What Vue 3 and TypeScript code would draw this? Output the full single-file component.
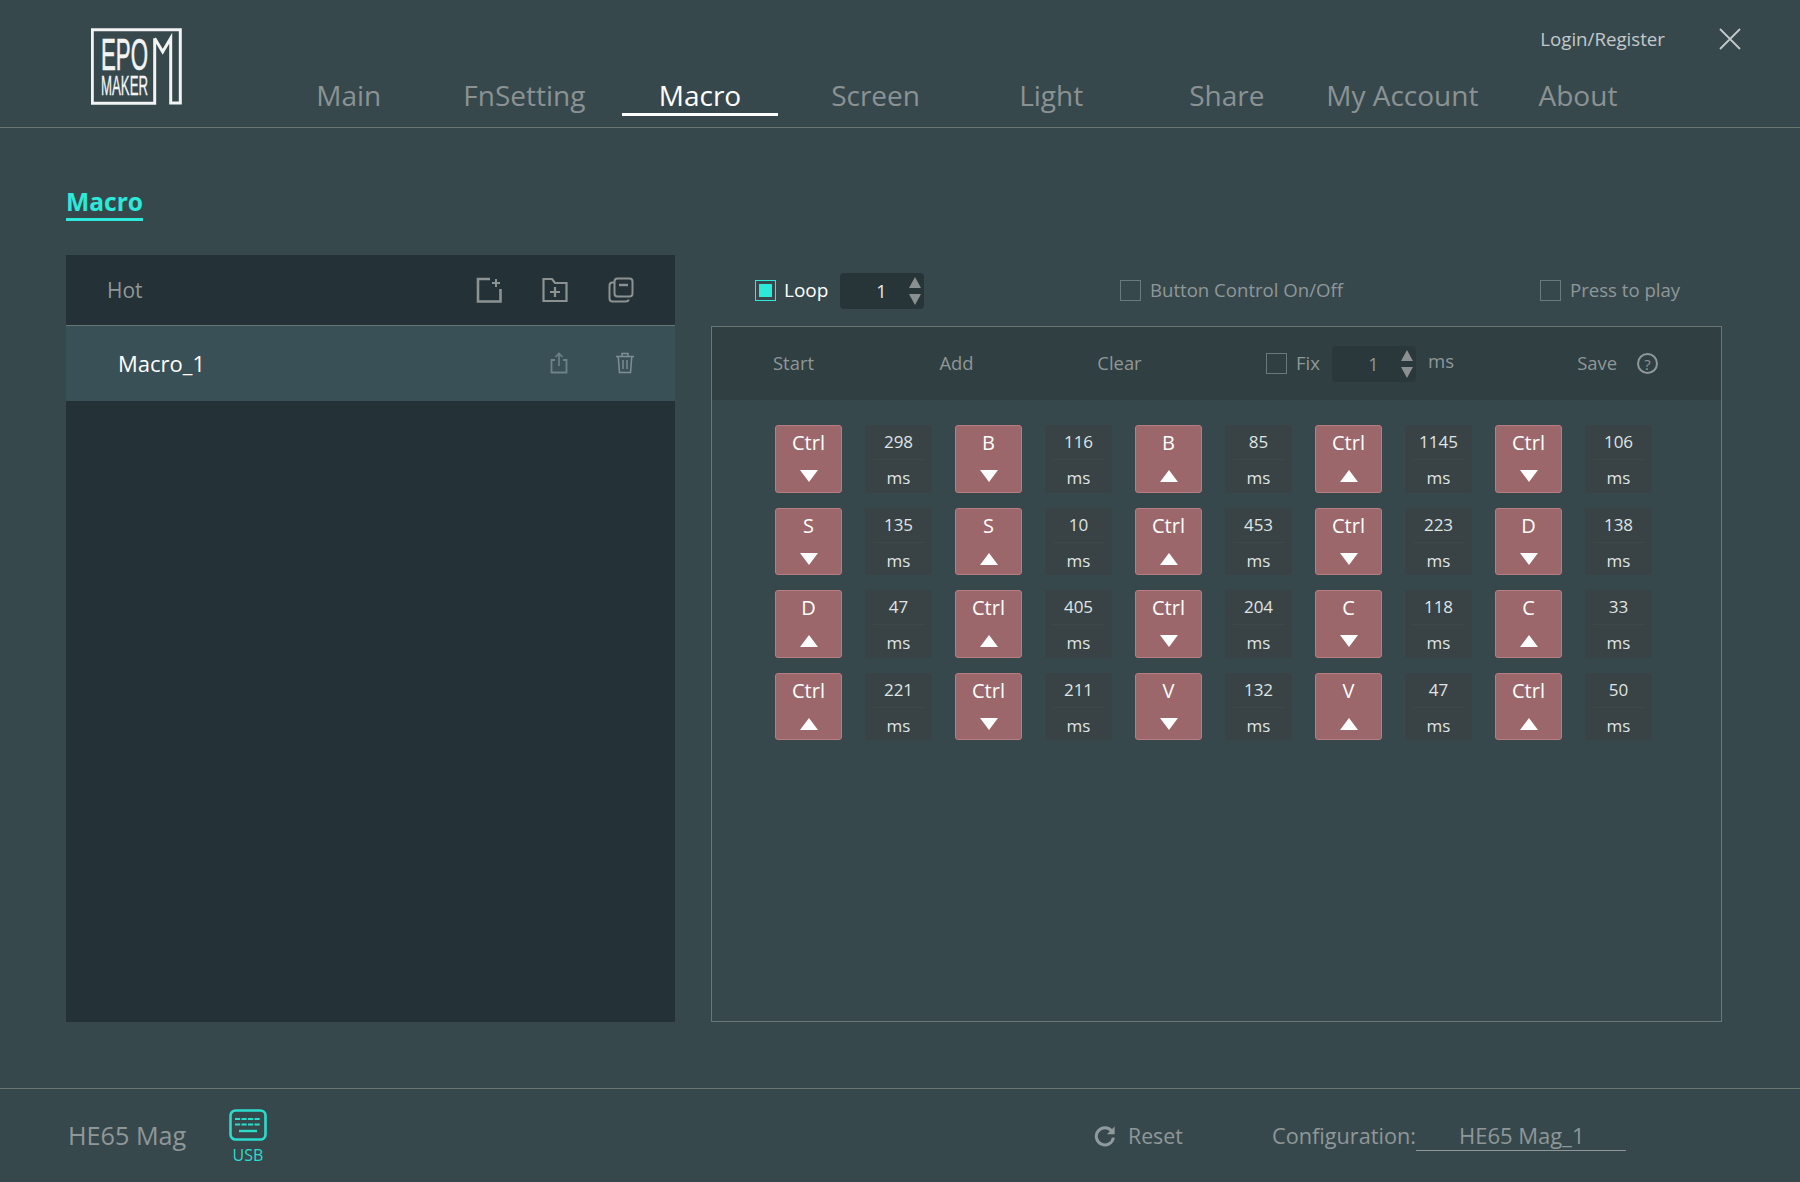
<template>
  <div class="app">
    <header class="topbar">
      <svg class="logo" viewBox="0 0 93 78" role="img" aria-label="Epomaker">
        <path
          d="M63.7 10.3 V75.3 H1.3 V1.7 H89.3 V75 H79.7 V10.3 L71.7 23.7 L63.7 10.3"
          fill="none"
          stroke="#f2f4f4"
          stroke-width="3"
        />
        <text x="10" y="42" textLength="47" lengthAdjust="spacingAndGlyphs" class="logo-big">EPO</text>
        <text x="10" y="67" textLength="47" lengthAdjust="spacingAndGlyphs" class="logo-small">MAKER</text>
      </svg>

      <div class="topbar-right">
        <div class="account-row">
          <span class="login">Login/Register</span>
          <svg class="close" viewBox="0 0 22 22">
            <path d="M1 1 L21 21 M21 1 L1 21" stroke="#c3c9ca" stroke-width="1.8" fill="none" />
          </svg>
        </div>
        <nav class="nav">
          <div v-for="item in navItems" :key="item" class="nav-item" :class="{ active: item === 'Macro' }">
            <span>{{ item }}</span>
          </div>
        </nav>
      </div>
    </header>

    <main class="content">
      <div class="section-title"><span>Macro</span></div>

      <div class="columns">
        <aside class="list-panel">
          <div class="list-head">
            <span class="hot">Hot</span>
            <div class="head-icons">
              <svg viewBox="0 0 26 26" width="26" height="26">
                <path d="M14 2 H2 V24.5 H24.5 V12" fill="none" stroke="#8c9292" stroke-width="2.6" />
                <path d="M20 2 V10 M16 6 H24" fill="none" stroke="#8c9292" stroke-width="2" />
              </svg>
              <svg viewBox="0 0 26 26" width="26" height="26">
                <path d="M1.5 2 H10 L13 6 H24.5 V24 H1.5 Z" fill="none" stroke="#8c9292" stroke-width="2.2" />
                <path d="M13 10 V20 M8 15 H18" fill="none" stroke="#8c9292" stroke-width="2.2" />
              </svg>
              <svg viewBox="0 0 26 26" width="26" height="26">
                <rect x="6.5" y="1.5" width="18" height="18" rx="3" fill="none" stroke="#8c9292" stroke-width="2" />
                <path d="M11 8 H20" stroke="#8c9292" stroke-width="2.4" />
                <path d="M6.5 5.5 H4.5 Q1.5 5.5 1.5 8.5 V21.5 Q1.5 24.5 4.5 24.5 H17.5 Q20.5 24.5 20.5 22.5" fill="none" stroke="#8c9292" stroke-width="2" />
              </svg>
            </div>
          </div>
          <div class="macro-row">
            <span class="macro-name">Macro_1</span>
            <div class="row-icons">
              <svg viewBox="0 0 20 22" width="20" height="22">
                <path d="M6 8 H2.5 V20.5 H17.5 V8 H14" fill="none" stroke="#6f8287" stroke-width="1.8" />
                <path d="M10 14 V2 M6.5 5 L10 1.5 L13.5 5" fill="none" stroke="#6f8287" stroke-width="1.6" />
              </svg>
              <svg viewBox="0 0 20 22" width="20" height="22">
                <path d="M1 4.5 H19 M7 4.5 V1.5 H13 V4.5" fill="none" stroke="#7f8f93" stroke-width="1.5" />
                <path d="M3.2 4.5 L4.5 20.5 H15.5 L16.8 4.5" fill="none" stroke="#7f8f93" stroke-width="1.5" />
                <path d="M8 8 V17 M12 8 V17" fill="none" stroke="#7f8f93" stroke-width="1.4" />
              </svg>
            </div>
          </div>
        </aside>

        <section class="editor">
          <div class="options">
            <div class="option loop-option">
              <span class="check checked"></span>
              <span class="loop-label">Loop</span>
              <div class="spin">
                <span class="spin-value">1</span>
                <span class="arrows"><i class="tri up"></i><i class="tri down"></i></span>
              </div>
            </div>
            <div class="option control-option">
              <span class="check"></span>
              <span>Button Control On/Off</span>
            </div>
            <div class="option">
              <span class="check"></span>
              <span>Press to play</span>
            </div>
          </div>

          <div class="recorder">
            <div class="toolbar">
              <span class="tool">Start</span>
              <span class="tool">Add</span>
              <span class="tool">Clear</span>
              <span class="check fix-check"></span>
              <span class="fix-label">Fix</span>
              <div class="spin spin-fix">
                <span class="spin-value">1</span>
                <span class="arrows"><i class="tri up"></i><i class="tri down"></i></span>
              </div>
              <span class="fix-unit">ms</span>
              <span class="save">Save</span>
              <span class="help">?</span>
            </div>

            <div class="events">
              <template v-for="(ev, i) in events" :key="i">
                <div class="key">
                  <span class="key-name">{{ ev.key }}</span>
                  <i class="key-arrow" :class="ev.down ? 'down' : 'up'"></i>
                </div>
                <div class="delay">
                  <span class="delay-value">{{ ev.ms }}</span>
                  <span class="delay-unit">ms</span>
                </div>
              </template>
            </div>
          </div>
        </section>
      </div>
    </main>

    <footer class="footer">
      <span class="device-name">HE65 Mag</span>
      <div class="device-link">
        <svg viewBox="0 0 38 32" width="38" height="32">
          <rect x="1.5" y="1.5" width="35" height="29" rx="5" fill="none" stroke="#2cdccb" stroke-width="2.6" />
          <path d="M6 10 H32 M6 15.5 H32" fill="none" stroke="#2cdccb" stroke-width="2" stroke-dasharray="5.2 1.3" />
          <path d="M10 22 H28" fill="none" stroke="#2cdccb" stroke-width="2.4" />
        </svg>
        <span>USB</span>
      </div>
      <div class="reset">
        <svg viewBox="0 0 22 22" width="22" height="22">
          <path d="M17.8 6.2 A8.6 8.6 0 1 0 19.4 12.6" fill="none" stroke="#8f9a9c" stroke-width="3" />
          <path d="M20.6 1.6 V9.2 H13 Z" fill="#8f9a9c" />
        </svg>
        <span>Reset</span>
      </div>
      <span class="config-label">Configuration:</span>
      <span class="config-field">HE65 Mag_1</span>
    </footer>
  </div>
</template>

<script setup lang="ts">
interface MacroEvent {
  key: string
  down: boolean
  ms: number
}

const navItems = ['Main', 'FnSetting', 'Macro', 'Screen', 'Light', 'Share', 'My Account', 'About']

const events: MacroEvent[] = [
  { key: 'Ctrl', down: true, ms: 298 },
  { key: 'B', down: true, ms: 116 },
  { key: 'B', down: false, ms: 85 },
  { key: 'Ctrl', down: false, ms: 1145 },
  { key: 'Ctrl', down: true, ms: 106 },
  { key: 'S', down: true, ms: 135 },
  { key: 'S', down: false, ms: 10 },
  { key: 'Ctrl', down: false, ms: 453 },
  { key: 'Ctrl', down: true, ms: 223 },
  { key: 'D', down: true, ms: 138 },
  { key: 'D', down: false, ms: 47 },
  { key: 'Ctrl', down: false, ms: 405 },
  { key: 'Ctrl', down: true, ms: 204 },
  { key: 'C', down: true, ms: 118 },
  { key: 'C', down: false, ms: 33 },
  { key: 'Ctrl', down: false, ms: 221 },
  { key: 'Ctrl', down: true, ms: 211 },
  { key: 'V', down: true, ms: 132 },
  { key: 'V', down: false, ms: 47 },
  { key: 'Ctrl', down: false, ms: 50 },
]
</script>

<style>
html,
body {
  margin: 0;
  background: #37484d;
}
</style>

<style scoped>
.app {
  width: 1800px;
  height: 1182px;
  overflow: hidden;
  background: #37484d;
  color: #8f9798;
  font-family: "Open Sans", "Noto Sans", sans-serif;
  font-size: 18.6px;
  display: flex;
  flex-direction: column;
}

.topbar {
  height: 127px;
  box-sizing: content-box;
  display: flex;
  padding-left: 91px;
  border-bottom: 1px solid #6a7674;
}

.logo {
  width: 93px;
  height: 78px;
  margin-top: 28px;
  margin-right: 77px;
  flex: none;
}

.logo-big {
  fill: #f2f4f4;
  stroke: #f2f4f4;
  stroke-width: 0.6;
  font-family: "Liberation Sans", sans-serif;
  font-size: 44px;
}

.logo-small {
  fill: #f2f4f4;
  stroke: #f2f4f4;
  stroke-width: 0.3;
  font-family: "Liberation Sans", sans-serif;
  font-size: 27px;
}

.topbar-right {
  flex: 1;
  display: flex;
  flex-direction: column;
}

.account-row {
  height: 78px;
  display: flex;
  align-items: center;
  justify-content: flex-end;
  padding-right: 59px;
}

.login {
  color: #c3c9ca;
  font-size: 18.7px;
  margin-right: 54px;
  margin-top: -2px;
}

.close {
  width: 22px;
  height: 22px;
}

.nav {
  display: flex;
}

.nav-item {
  width: 175.6px;
  flex: none;
  display: flex;
  justify-content: center;
  font-size: 28px;
  color: #8b9293;
}

.nav-item span {
  width: 156px;
  height: 35px;
  line-height: 35px;
  text-align: center;
  border-bottom: 3px solid transparent;
  white-space: nowrap;
}

.nav-item.active {
  color: #fff;
}

.nav-item.active span {
  border-bottom-color: #fff;
}

.content {
  flex: 1;
  padding: 0 78px 0 66px;
}

.section-title {
  height: 127px;
  padding-top: 56px;
  box-sizing: border-box;
}

.section-title span {
  display: inline-block;
  height: 34px;
  line-height: 35px;
  color: #2de9d9;
  font-size: 24.6px;
  font-weight: 700;
  border-bottom: 3px solid #2de9d9;
}

.columns {
  display: flex;
  gap: 36px;
  height: 767px;
}

.list-panel {
  width: 609px;
  flex: none;
  background: #243136;
}

.list-head {
  height: 70px;
  display: flex;
  align-items: center;
  justify-content: space-between;
  padding: 0 41px;
  border-bottom: 1px solid #6a7674;
}

.hot {
  font-size: 21px;
}

.head-icons {
  display: flex;
  gap: 40px;
}

.macro-row {
  height: 75px;
  background: #3a5057;
  display: flex;
  align-items: center;
  justify-content: space-between;
  padding: 0 40px 0 52px;
}

.macro-name {
  color: #fff;
  font-size: 22px;
  margin-top: -2px;
}

.row-icons {
  display: flex;
  gap: 46px;
  margin-top: -2px;
}

.editor {
  flex: 1;
  display: flex;
  flex-direction: column;
}

.options {
  height: 71px;
  display: flex;
  align-items: center;
  padding-left: 44px;
}

.option {
  display: flex;
  align-items: center;
  gap: 9px;
}

.option > span:last-child {
  margin-top: -2px;
}

.loop-option {
  width: 365px;
}

.control-option {
  width: 420px;
}

.check {
  width: 21px;
  height: 21px;
  box-sizing: border-box;
  border: 1px solid #6a7a7c;
  display: inline-flex;
  align-items: center;
  justify-content: center;
  flex: none;
}

.check.checked {
  border-color: #2de9d9;
}

.check.checked::after {
  content: "";
  width: 13px;
  height: 13px;
  background: #2de9d9;
}

.loop-label {
  color: #fff;
  width: 47px;
  margin-left: -1px;
  margin-top: -2px;
  font-size: 19px;
}

.spin {
  width: 84px;
  height: 36px;
  background: #273438;
  border-radius: 4px;
  position: relative;
  display: flex;
  align-items: center;
  justify-content: center;
}

.spin-value {
  color: #e8ecec;
  font-size: 18px;
  margin-right: 1px;
}

.arrows {
  position: absolute;
  right: 1px;
  top: 4px;
  display: flex;
  flex-direction: column;
  gap: 6px;
  width: 14px;
}

.tri {
  display: block;
  width: 0;
  height: 0;
  border-left: 6.5px solid transparent;
  border-right: 6.5px solid transparent;
}

.tri.up {
  border-bottom: 11px solid #8a8f8f;
}

.tri.down {
  border-top: 11px solid #8a8f8f;
}

.recorder {
  flex: 1;
  border: 1px solid #6a7674;
}

.toolbar {
  height: 73px;
  background: #2f3f42;
  display: flex;
  align-items: center;
  padding-right: 63px;
}

.tool {
  width: 163px;
  text-align: center;
  flex: none;
  font-size: 18.4px;
  margin-top: -2px;
}

.fix-check {
  margin-left: 65px;
}

.fix-label {
  margin-left: 9px;
  width: 36px;
  margin-top: -2px;
}

.spin-fix {
  background: #2a383b;
}

.spin-fix .spin-value {
  color: #8f9798;
}

.fix-unit {
  margin-left: 12px;
  margin-top: -7px;
}

.save {
  margin-left: auto;
  font-size: 18.4px;
  margin-top: -2px;
}

.help {
  width: 21px;
  height: 21px;
  box-sizing: border-box;
  border: 2px solid #8f9798;
  border-radius: 50%;
  margin-left: 20px;
  display: flex;
  align-items: center;
  justify-content: center;
  font-size: 15px;
}

.events {
  display: grid;
  grid-template-columns: repeat(10, 67px);
  grid-auto-rows: 67.5px;
  column-gap: 23px;
  row-gap: 15px;
  padding: 25px 0 0 63px;
}

.key {
  background: #9c676a;
  border: 1px solid #b67e81;
  border-radius: 3px;
  box-sizing: border-box;
  display: flex;
  flex-direction: column;
  align-items: center;
  color: #fff;
}

.key-name {
  height: 34px;
  line-height: 33px;
  font-size: 20px;
}

.key-arrow {
  display: block;
  width: 0;
  height: 0;
  margin-top: 10px;
  border-left: 9px solid transparent;
  border-right: 9px solid transparent;
}

.key-arrow.up {
  border-bottom: 12px solid #fff;
}

.key-arrow.down {
  border-top: 12px solid #fff;
}

.delay {
  background: #394244;
  border-radius: 3px;
  display: flex;
  flex-direction: column;
  align-items: center;
  color: #dfe5e5;
  font-size: 17px;
}

.delay-value {
  width: 52px;
  height: 34px;
  line-height: 34px;
  text-align: center;
  border-bottom: 1px solid #3f4849;
}

.delay-unit {
  height: 33px;
  line-height: 36px;
}

.footer {
  height: 93px;
  border-top: 1px solid #6a7674;
  display: flex;
  align-items: center;
  padding-left: 68px;
}

.device-name {
  width: 161px;
  font-size: 25.2px;
  flex: none;
  margin-top: -2px;
}

.device-link {
  width: 38px;
  display: flex;
  flex-direction: column;
  align-items: center;
  gap: 4px;
  margin-top: 3px;
  color: #2cdccb;
  font-size: 16px;
  line-height: 20px;
  white-space: nowrap;
}

.reset {
  margin-left: 827px;
  width: 178px;
  flex: none;
  display: flex;
  align-items: center;
  gap: 12px;
  font-size: 21.3px;
}

.config-label {
  font-size: 21.7px;
  width: 144px;
  flex: none;
  white-space: nowrap;
}

.config-field {
  width: 210px;
  box-sizing: border-box;
  padding-left: 43px;
  font-size: 22px;
  border-bottom: 1px solid #8f9798;
  white-space: nowrap;
}
</style>
